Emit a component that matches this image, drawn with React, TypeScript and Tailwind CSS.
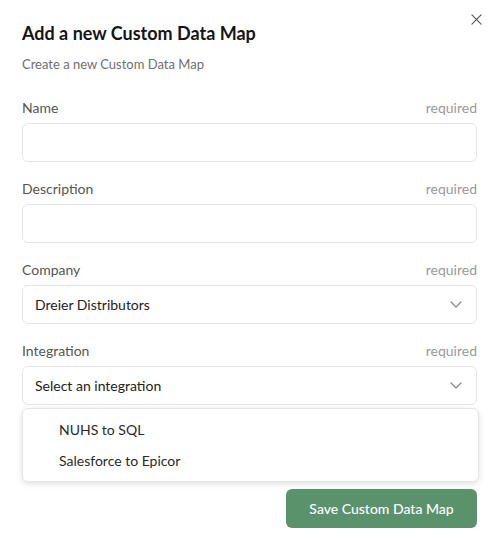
import React from "react";

const font = { fontFamily: "Lato, 'Noto Sans', sans-serif" };

function Label({ text }: { text: string }) {
  return (
    <div className="flex h-[20px] items-center justify-between text-[14px] leading-[20px]">
      <span className="text-[#555555]">{text}</span>
      <span className="text-[#9a9a9a]">required</span>
    </div>
  );
}

function Chevron() {
  return (
    <svg width="12" height="7" viewBox="0 0 12 7" fill="none" stroke="#8a8a8a" strokeWidth="1.2" strokeLinecap="round" strokeLinejoin="round">
      <path d="M1 1l5 5 5-5" />
    </svg>
  );
}

export default function App() {
  return (
    <div className="relative h-[536px] w-[500px] bg-white" style={font}>
      <button className="absolute right-[18px] top-[14px]">
        <svg width="11" height="11" viewBox="0 0 12 12" fill="none" stroke="#555" strokeWidth="1.2" strokeLinecap="round">
          <path d="M1 1l10 10M11 1L1 11" />
        </svg>
      </button>
      <div className="flex flex-col pl-[22px] pr-[23px] pt-[21px]">
        <h1 className="h-[24px] text-[18px] font-bold leading-[24px] text-[#151515]">Add a new Custom Data Map</h1>
        <p className="mt-[9px] h-[20px] text-[13px] leading-[20px] text-[#707070]">Create a new Custom Data Map</p>

        <div className="mt-[24px] flex flex-col gap-[17px]">
          <div className="flex flex-col gap-[5px]">
            <Label text="Name" />
            <div className="h-[39px] rounded-[6px] border border-[#e6e6e6]" />
          </div>
          <div className="flex flex-col gap-[5px]">
            <Label text="Description" />
            <div className="h-[39px] rounded-[6px] border border-[#e6e6e6]" />
          </div>
          <div className="flex flex-col gap-[5px]">
            <Label text="Company" />
            <div className="flex h-[39px] items-center justify-between rounded-[6px] border border-[#e6e6e6] pl-[12px] pr-[14px] text-[14px] text-[#222]">
              <span>Dreier Distributors</span>
              <Chevron />
            </div>
          </div>
          <div className="flex flex-col gap-[5px]">
            <Label text="Integration" />
            <div className="relative">
              <div className="flex h-[39px] items-center justify-between rounded-[6px] border border-[#e6e6e6] pl-[12px] pr-[14px] text-[14px] text-[#222]">
                <span>Select an integration</span>
                <Chevron />
              </div>
              <div className="absolute left-0 right-[-2px] top-[42px] z-10 rounded-[6px] border border-[#e6e6e6] bg-white py-[5px] shadow-[0_2px_6px_rgba(0,0,0,0.12)]">
                <div className="flex h-[31px] items-center pl-[36px] text-[14px] text-[#2a2a2a]">NUHS to SQL</div>
                <div className="flex h-[31px] items-center pl-[36px] text-[14px] text-[#2a2a2a]">Salesforce to Epicor</div>
              </div>
            </div>
          </div>
        </div>

        <div className="mt-[84px] flex justify-end">
          <button className="h-[39px] w-[191px] rounded-[6px] bg-[#5a926c] text-[14px] font-medium text-white">
            Save Custom Data Map
          </button>
        </div>
      </div>
    </div>
  );
}
